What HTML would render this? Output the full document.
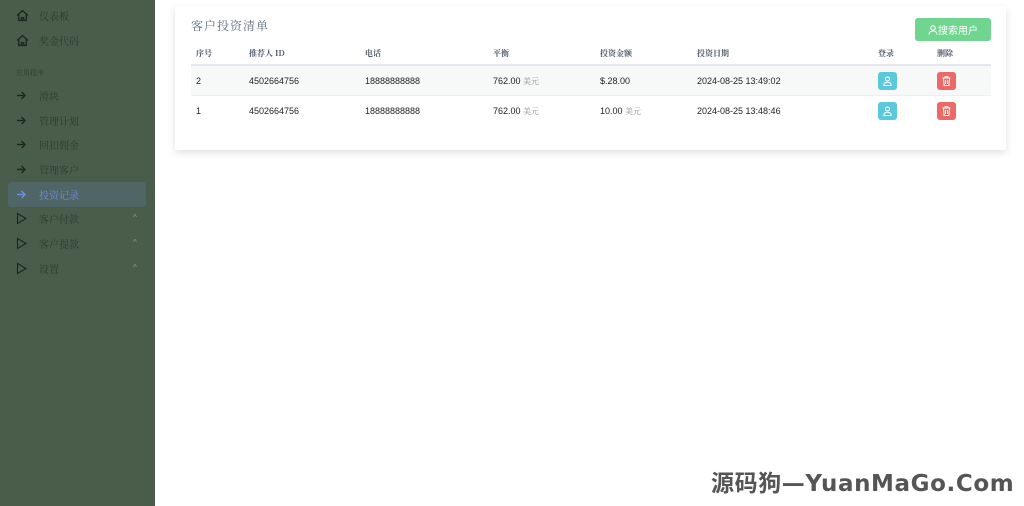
<!DOCTYPE html>
<html><head><meta charset="utf-8"><style>
*{margin:0;padding:0;box-sizing:border-box}
body{width:1024px;height:506px;overflow:hidden;background:#fff;font-family:"Liberation Sans","Noto Sans CJK SC",sans-serif;position:relative}
.side{position:absolute;left:0;top:0;width:155px;height:506px;background:#4a5d4b}
.it{position:absolute;left:16px;height:14px;font-size:10px;color:#2c3a2d;font-family:"Noto Serif CJK SC","Liberation Serif",serif;display:flex;align-items:center;white-space:nowrap}
.it .ic{width:23px;display:flex;align-items:center}
.car{position:absolute;left:133px;font-size:8px;color:#8a9a8b}
.act{position:absolute;left:8px;top:182px;width:138px;height:25px;background:#506565;border-radius:3px}
.card{position:absolute;left:175px;top:6px;width:831px;height:144px;background:#fff;box-shadow:0 3px 8px rgba(0,0,0,.12);border-radius:2px}
.title{position:absolute;left:16px;top:11px;font-size:12px;color:#5b6b7c;font-family:"Noto Serif CJK SC",serif;letter-spacing:1px}
.btn{position:absolute;left:740px;top:12px;width:76px;height:23px;background:#6fd58f;border-radius:3px;color:#fff;font-size:10px;display:flex;align-items:center;justify-content:center}
.th{position:absolute;top:42px;font-size:8px;color:#4a5566;font-family:"Noto Serif CJK SC",serif;font-weight:bold}
.hl{position:absolute;left:16px;top:58px;width:800px;height:2px;background:#e4e7ee}
.row{position:absolute;left:16px;width:800px;height:30px}
.td{position:absolute;font-size:9px;color:#222;top:10px}
.td small{font-size:8px;color:#888;font-family:"Noto Serif CJK SC",serif}
.b{position:absolute;top:6px;width:19px;height:18px;border-radius:3px;display:flex;align-items:center;justify-content:center}
.wm{position:absolute;left:711px;top:464px;font-size:23px;font-weight:bold;color:#555;font-family:"DejaVu Sans","Noto Sans CJK SC",sans-serif;letter-spacing:0.6px;white-space:nowrap}
</style></head><body>
<div class="side">
<div class="act"></div>
<div class="it" style="top:8px"><span class="ic"><svg width="13" height="13" viewBox="0 0 12 12" fill="none" stroke="#1e281f" stroke-width="1.3"><path d="M1 6L6 1.5 11 6M2.5 5v5.5h7V5M5 10.5V8h2v2.5"/></svg></span><span>仪表板</span></div>
<div class="it" style="top:33px"><span class="ic"><svg width="13" height="13" viewBox="0 0 12 12" fill="none" stroke="#1e281f" stroke-width="1.3"><path d="M1 6L6 1.5 11 6M2.5 5v5.5h7V5M5 10.5V8h2v2.5"/></svg></span><span>奖金代码</span></div>
<div class="it" style="top:66px;font-size:7px;color:#2e3d2f">应用程序</div>
<div class="it" style="top:88px"><span class="ic"><svg width="10" height="9" viewBox="0 0 10 9" fill="none" stroke="#1e281f" stroke-width="1.4"><path d="M1 4.5h8M5.5 1l3.5 3.5L5.5 8"/></svg></span><span>滑块</span></div>
<div class="it" style="top:113px"><span class="ic"><svg width="10" height="9" viewBox="0 0 10 9" fill="none" stroke="#1e281f" stroke-width="1.4"><path d="M1 4.5h8M5.5 1l3.5 3.5L5.5 8"/></svg></span><span>管理计划</span></div>
<div class="it" style="top:137px"><span class="ic"><svg width="10" height="9" viewBox="0 0 10 9" fill="none" stroke="#1e281f" stroke-width="1.4"><path d="M1 4.5h8M5.5 1l3.5 3.5L5.5 8"/></svg></span><span>回扣佣金</span></div>
<div class="it" style="top:162px"><span class="ic"><svg width="10" height="9" viewBox="0 0 10 9" fill="none" stroke="#1e281f" stroke-width="1.4"><path d="M1 4.5h8M5.5 1l3.5 3.5L5.5 8"/></svg></span><span>管理客户</span></div>
<div class="it" style="top:187px;color:#6d8fe0"><span class="ic"><svg width="10" height="9" viewBox="0 0 10 9" fill="none" stroke="#6d8fe0" stroke-width="1.4"><path d="M1 4.5h8M5.5 1l3.5 3.5L5.5 8"/></svg></span><span>投资记录</span></div>
<div class="it" style="top:211px"><span class="ic"><svg width="11" height="13" viewBox="0 0 11 12" fill="none" stroke="#1e281f" stroke-width="1.2"><path d="M1.5 1L10 6 1.5 11Z"/></svg></span><span>客户付款</span></div>
<div class="it" style="top:236px"><span class="ic"><svg width="11" height="13" viewBox="0 0 11 12" fill="none" stroke="#1e281f" stroke-width="1.2"><path d="M1.5 1L10 6 1.5 11Z"/></svg></span><span>客户提款</span></div>
<div class="it" style="top:261px"><span class="ic"><svg width="11" height="13" viewBox="0 0 11 12" fill="none" stroke="#1e281f" stroke-width="1.2"><path d="M1.5 1L10 6 1.5 11Z"/></svg></span><span>设置</span></div>
<div class="car" style="top:213px">^</div><div class="car" style="top:238px">^</div><div class="car" style="top:263px">^</div>
</div>
<div class="card">
<div class="title">客户投资清单</div>
<div class="btn"><svg width="10" height="10" viewBox="0 0 10 10" fill="none" stroke="#fff" stroke-width="1.1"><circle cx="5" cy="3" r="2.2"/><path d="M1 9.5c0-2.5 2-3.5 4-3.5s4 1 4 3.5"/></svg>搜索用户</div>
<div class="th" style="left:21px">序号</div>
<div class="th" style="left:74px">推荐人 ID</div>
<div class="th" style="left:190px">电话</div>
<div class="th" style="left:318px">平衡</div>
<div class="th" style="left:425px">投资金额</div>
<div class="th" style="left:522px">投资日期</div>
<div class="th" style="left:703px">登录</div>
<div class="th" style="left:762px">删除</div>
<div class="hl"></div>
<div class="row" style="top:60px;background:#f7f8f8;border-bottom:1px solid #eceef0">
<div class="td" style="left:5px">2</div><div class="td" style="left:58px">4502664756</div><div class="td" style="left:174px">18888888888</div><div class="td" style="left:302px">762.00 <small>美元</small></div><div class="td" style="left:409px">$.28.00</div><div class="td" style="left:506px">2024-08-25 13:49:02</div>
<div class="b" style="left:687px;background:#5bc8dc"><svg width="9" height="10" viewBox="0 0 9 10" fill="none" stroke="#fff" stroke-width="1"><circle cx="4.5" cy="3" r="2"/><path d="M.8 9.5c0-2.3 1.7-3.3 3.7-3.3s3.7 1 3.7 3.3z"/></svg></div>
<div class="b" style="left:746px;background:#ec6a66"><svg width="9" height="10" viewBox="0 0 9 10" fill="none" stroke="#fff" stroke-width="1"><path d="M.5 2h8M3 2V.8h3V2M1.5 2l.6 7.5h4.8L7.5 2M3.5 4v4M5.5 4v4"/></svg></div>
</div>
<div class="row" style="top:90px">
<div class="td" style="left:5px">1</div><div class="td" style="left:58px">4502664756</div><div class="td" style="left:174px">18888888888</div><div class="td" style="left:302px">762.00 <small>美元</small></div><div class="td" style="left:409px">10.00 <small>美元</small></div><div class="td" style="left:506px">2024-08-25 13:48:46</div>
<div class="b" style="left:687px;background:#5bc8dc"><svg width="9" height="10" viewBox="0 0 9 10" fill="none" stroke="#fff" stroke-width="1"><circle cx="4.5" cy="3" r="2"/><path d="M.8 9.5c0-2.3 1.7-3.3 3.7-3.3s3.7 1 3.7 3.3z"/></svg></div>
<div class="b" style="left:746px;background:#ec6a66"><svg width="9" height="10" viewBox="0 0 9 10" fill="none" stroke="#fff" stroke-width="1"><path d="M.5 2h8M3 2V.8h3V2M1.5 2l.6 7.5h4.8L7.5 2M3.5 4v4M5.5 4v4"/></svg></div>
</div>
</div>
<div class="wm">源码狗—YuanMaGo.Com</div>
</body></html>
